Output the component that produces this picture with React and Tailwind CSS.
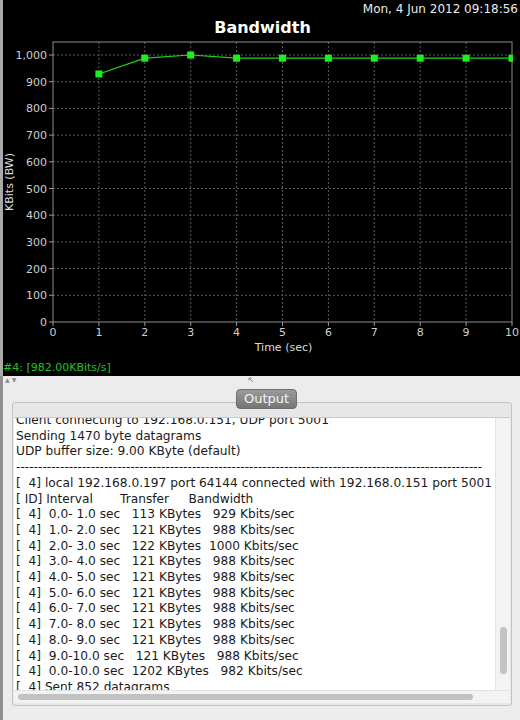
import React from "react";

const xs = (v) => 50 + v * 45.9;
const ys = (v) => 322 - v * 0.267;

const data = [
  [1, 929],
  [2, 988],
  [3, 1000],
  [4, 988],
  [5, 988],
  [6, 988],
  [7, 988],
  [8, 988],
  [9, 988],
  [10, 988],
];

function Chart() {
  const yTicks = [0, 100, 200, 300, 400, 500, 600, 700, 800, 900, 1000];
  const xTicks = [0, 1, 2, 3, 4, 5, 6, 7, 8, 9, 10];
  const fmt = (v) => (v === 1000 ? "1,000" : String(v));
  const pts = data.map(([x, y]) => `${xs(x)},${ys(y)}`).join(" ");
  return (
    <svg width="517" height="360" viewBox="0 0 517 360" style={{ display: "block", fontFamily: "'DejaVu Sans', sans-serif" }}>
      <defs>
        <clipPath id="plotclip">
          <rect x="50" y="30" width="460" height="300" />
        </clipPath>
      </defs>
      <text x="515" y="12.5" textAnchor="end" fontSize="12" fill="#ececec">Mon, 4 Jun 2012 09:18:56</text>
      <text x="259.5" y="33" textAnchor="middle" fontSize="16" fontWeight="bold" fill="#ffffff">Bandwidth</text>
      {yTicks.slice(1).map((t) => (
        <line key={"gy" + t} x1="50" x2="509" y1={ys(t)} y2={ys(t)} stroke="#5c5c5c" strokeWidth="1" strokeDasharray="2 2" />
      ))}
      {xTicks.slice(1, 10).map((t) => (
        <line key={"gx" + t} x1={xs(t)} x2={xs(t)} y1="42" y2="322" stroke="#5c5c5c" strokeWidth="1" strokeDasharray="2 2" />
      ))}
      <rect x="50" y="42" width="459" height="280" fill="none" stroke="#8c8c8c" strokeWidth="1" />
      {yTicks.map((t) => (
        <g key={"ty" + t}>
          <line x1="46" x2="50" y1={ys(t)} y2={ys(t)} stroke="#9a9a9a" />
          <text x="44" y={ys(t) + 4} textAnchor="end" fontSize="11" fill="#cfcfcf">{fmt(t)}</text>
        </g>
      ))}
      {xTicks.map((t) => (
        <g key={"tx" + t}>
          <line x1={xs(t)} x2={xs(t)} y1="322" y2="326" stroke="#9a9a9a" />
          <text x={xs(t)} y="335.5" textAnchor="middle" fontSize="11" fill="#cfcfcf">{t}</text>
        </g>
      ))}
      <text x="280.5" y="350.5" textAnchor="middle" fontSize="11" fill="#dcdcdc">Time (sec)</text>
      <text transform="translate(9.5,182) rotate(-90)" textAnchor="middle" fontSize="11" fill="#dcdcdc">KBits (BW)</text>
      <g clipPath="url(#plotclip)">
        <polyline points={pts} fill="none" stroke="#22d422" strokeWidth="1.2" />
        {data.map(([x, y]) => (
          <rect key={x} x={xs(x) - 3.5} y={ys(y) - 3.5} width="7" height="7" fill="#1cf01c" />
        ))}
      </g>
    </svg>
  );
}

const lines = [
  "Client connecting to 192.168.0.151, UDP port 5001",
  "Sending 1470 byte datagrams",
  "UDP buffer size: 9.00 KByte (default)",
  "-".repeat(106),
  "[  4] local 192.168.0.197 port 64144 connected with 192.168.0.151 port 5001",
  "[ ID] Interval       Transfer     Bandwidth",
  "[  4]  0.0- 1.0 sec   113 KBytes   929 Kbits/sec",
  "[  4]  1.0- 2.0 sec   121 KBytes   988 Kbits/sec",
  "[  4]  2.0- 3.0 sec   122 KBytes  1000 Kbits/sec",
  "[  4]  3.0- 4.0 sec   121 KBytes   988 Kbits/sec",
  "[  4]  4.0- 5.0 sec   121 KBytes   988 Kbits/sec",
  "[  4]  5.0- 6.0 sec   121 KBytes   988 Kbits/sec",
  "[  4]  6.0- 7.0 sec   121 KBytes   988 Kbits/sec",
  "[  4]  7.0- 8.0 sec   121 KBytes   988 Kbits/sec",
  "[  4]  8.0- 9.0 sec   121 KBytes   988 Kbits/sec",
  "[  4]  9.0-10.0 sec   121 KBytes   988 Kbits/sec",
  "[  4]  0.0-10.0 sec  1202 KBytes   982 Kbits/sec",
  "[  4] Sent 852 datagrams",
];

export default function App() {
  return (
    <div className="w-[520px] h-[720px] overflow-hidden flex flex-col bg-[#ececec]" style={{ fontFamily: "'DejaVu Sans', sans-serif" }}>
      <div className="h-[376px] shrink-0 bg-black border-l-[3px] border-[#a9a9a9] flex flex-col">
        <Chart />
        <div className="h-[16px] leading-[16px] text-[11px] text-[#22c422] whitespace-pre">#4: [982.00KBits/s]</div>
      </div>
      <div className="h-[344px] shrink-0 border-l-[3px] border-[#8e8e8e] flex flex-col">
        <div className="h-[10px] flex items-start">
          <div className="flex gap-[2px] pl-[2px] pt-[1px] text-[6px] leading-[6px] text-[#8a8a8a]">
            <span>▲</span>
            <span>▼</span>
          </div>
          <div className="ml-[232px] pt-[1px]">
            <svg width="6" height="6" viewBox="0 0 6 6">
              <path d="M1 1 L5 5 M1 1 L3.5 1 M1 1 L1 3.5" stroke="#8a8a8a" strokeWidth="1" fill="none" />
            </svg>
          </div>
        </div>
        <div className="mt-[3px] flex justify-center relative z-10 ml-[10px]">
          <div className="w-[61px] h-[20px] rounded-[4px] border border-[#6e6e6e] bg-gradient-to-b from-[#9a9a9a] to-[#767676] text-[#f4f4f4] text-[13px] leading-[18px] text-center">
            Output
          </div>
        </div>
        <div className="-mt-[7px] ml-[9px] w-[500px] h-[304px] shrink-0 rounded-[3px] border border-[#c3c3c3] bg-[#e7e7e7] pt-[14px] px-[1px] flex flex-col">
          <div className="flex flex-col border-t border-[#c9c9c9]">
            <div className="h-[272px] flex">
              <div className="flex-1 bg-white overflow-hidden">
                <div className="-mt-[5px] pl-[2px] text-[12.2px] leading-[15.7px] text-[#1a1a1a] whitespace-pre">
                  {lines.map((l, i) => (
                    <div key={i}>{l}</div>
                  ))}
                </div>
              </div>
              <div className="w-[15px] bg-[#f3f3f3] border-l border-[#e2e2e2] flex flex-col items-center">
                <div className="mt-[209px] w-[7px] h-[47px] rounded-full bg-[#c4c4c4]" />
              </div>
            </div>
            <div className="h-[13px] flex bg-[#f3f3f3] border-t border-[#e2e2e2]">
              <div className="flex-1 flex items-center pl-[4px]">
                <div className="w-[455px] h-[6px] rounded-full bg-[#c2c2c2]" />
              </div>
              <div className="w-[15px]" />
            </div>
          </div>
        </div>
      </div>
    </div>
  );
}
